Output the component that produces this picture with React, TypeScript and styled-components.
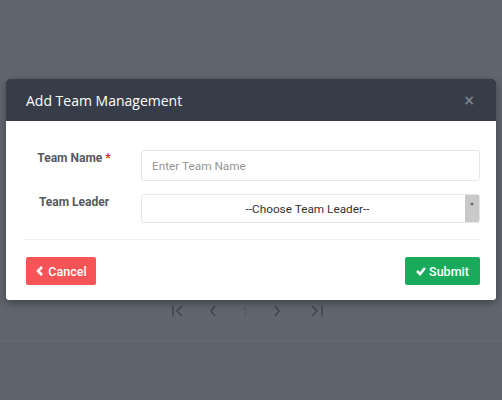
import React from "react";
import styled, { createGlobalStyle } from "styled-components";

const Global = createGlobalStyle`
  html, body { margin: 0; padding: 0; }
  body {
    background: #61656e;
    font-family: Roboto, "Liberation Sans", sans-serif;
    width: 502px;
    height: 400px;
    overflow: hidden;
  }
`;

const Page = styled.div`
  position: relative;
  width: 502px;
  height: 400px;
  display: flex;
  flex-direction: column;
`;

const Spacer = styled.div`
  height: 300px;
`;

const Pager = styled.div`
  height: 22px;
  margin-bottom: 19px;
  display: flex;
  align-items: center;
  justify-content: center;
  padding-right: 2px;
  color: #40454d;
  font-size: 14px;
`;

const PageItem = styled.span<{ $w: number }>`
  width: ${(p) => p.$w}px;
  display: flex;
  justify-content: center;
  align-items: center;
`;

const PageNum = styled.span`
  color: #555b63;
  font-size: 13px;
`;

const Footer = styled.div`
  flex: 1;
  background: #5d646c;
  border-top: 1px solid #646a73;
`;

const Modal = styled.div`
  position: absolute;
  left: 6px;
  top: 79px;
  width: 490px;
  background: #fff;
  border-radius: 3px;
  box-shadow: 0 3px 9px rgba(0, 0, 0, 0.35);
  overflow: hidden;
`;

const Header = styled.div`
  height: 42px;
  background: #363d48;
  display: flex;
  align-items: center;
  justify-content: space-between;
  padding: 0 20px 0 20px;
  box-sizing: border-box;
`;

const Title = styled.h4`
  margin: 0;
  color: #fff;
  font-family: "Open Sans", sans-serif;
  font-weight: 500;
  font-size: 14px;
`;

const Close = styled.span`
  color: #7b8189;
  font-family: "DejaVu Sans", sans-serif;
  font-weight: bold;
  font-size: 14px;
  line-height: 1;
  margin-right: 1px;
`;

const Body = styled.div`
  padding: 29px 16px 0 19px;
  display: flex;
  flex-direction: column;
  gap: 13px;
`;

const Row = styled.div`
  display: grid;
  grid-template-columns: 116px 1fr;
  align-items: start;
`;

const Label = styled.label`
  text-align: center;
  font-weight: bold;
  font-size: 12px;
  color: #555a60;
  padding-top: 1px;
  padding-right: 18px;
`;

const Star = styled.span`
  color: #e0262b;
`;

const Input = styled.input`
  height: 31px;
  box-sizing: border-box;
  border: 1px solid #e6e6e6;
  border-radius: 3px;
  padding: 0 10px;
  font-family: Roboto, sans-serif;
  font-size: 11.8px;
  color: #333;
  outline: none;
  &::placeholder {
    color: #959595;
  }
`;

const Select = styled.div`
  height: 29px;
  box-sizing: border-box;
  border: 1px solid #e6e6e6;
  border-radius: 3px;
  display: flex;
  align-items: stretch;
  font-size: 11.8px;
  color: #333;
`;

const SelectText = styled.div`
  flex: 1;
  display: flex;
  align-items: center;
  justify-content: center;
  padding-left: 8px;
`;

const Arrow = styled.div`
  width: 14px;
  background: #c9c9c9;
  display: flex;
  align-items: flex-start;
  justify-content: center;
  padding-top: 8px;
  box-sizing: border-box;
  &::after {
    content: "";
    border-left: 2.5px solid transparent;
    border-right: 2.5px solid transparent;
    border-top: 3px solid #666;
  }
`;

const Divider = styled.hr`
  border: 0;
  border-top: 1px solid #eeeeee;
  margin: 3px 0 0 0;
`;

const Actions = styled.div`
  display: flex;
  justify-content: space-between;
  padding: 17px 16px 15px 20px;
`;

const Button = styled.button<{ $variant: "danger" | "success" }>`
  height: 28px;
  border: 0;
  border-radius: 2px;
  color: #fff;
  font-family: Roboto, sans-serif;
  font-size: 12.5px;
  font-weight: 500;
  display: flex;
  align-items: center;
  gap: 3px;
  padding: 0;
  width: ${(p) => (p.$variant === "danger" ? "70px" : "75px")};
  justify-content: center;
  background: ${(p) => (p.$variant === "danger" ? "#f65456" : "#1aaa5c")};
`;

const Icon = styled.svg`
  width: 10px;
  height: 10px;
  flex: none;
`;

export default function App() {
  return (
    <>
      <Global />
      <Page>
        <Spacer />
        <Pager>
          <PageItem $w={36}>
            <svg width="14" height="12" viewBox="0 0 14 12" fill="none" stroke="#41464e" strokeWidth="1.6">
              <line x1="2" y1="0.5" x2="2" y2="11.5" />
              <polyline points="11,1 6,6 11,11" />
            </svg>
          </PageItem>
          <PageItem $w={34}>
            <svg width="8" height="12" viewBox="0 0 8 12" fill="none" stroke="#41464e" strokeWidth="1.6">
              <polyline points="6,1 2,6 6,11" />
            </svg>
          </PageItem>
          <PageItem $w={30}>
            <PageNum>1</PageNum>
          </PageItem>
          <PageItem $w={34}>
            <svg width="8" height="12" viewBox="0 0 8 12" fill="none" stroke="#41464e" strokeWidth="1.6">
              <polyline points="2,1 6,6 2,11" />
            </svg>
          </PageItem>
          <PageItem $w={46}>
            <svg width="14" height="12" viewBox="0 0 14 12" fill="none" stroke="#41464e" strokeWidth="1.6">
              <polyline points="2,1 7,6 2,11" />
              <line x1="12" y1="0.5" x2="12" y2="11.5" />
            </svg>
          </PageItem>
        </Pager>
        <Footer />
        <Modal>
          <Header>
            <Title>Add Team Management</Title>
            <Close>×</Close>
          </Header>
          <Body>
            <Row>
              <Label>
                Team Name <Star>*</Star>
              </Label>
              <Input placeholder="Enter Team Name" />
            </Row>
            <Row>
              <Label>Team Leader</Label>
              <Select>
                <SelectText>--Choose Team Leader--</SelectText>
                <Arrow />
              </Select>
            </Row>
            <Divider />
          </Body>
          <Actions>
            <Button $variant="danger">
              <Icon viewBox="0 0 10 10" fill="none" stroke="#fff" strokeWidth="2.6">
                <polyline points="7,1 3,5 7,9" />
              </Icon>
              Cancel
            </Button>
            <Button $variant="success">
              <Icon viewBox="0 0 10 10" fill="none" stroke="#fff" strokeWidth="2.6">
                <polyline points="1,5 4,8 9,2" />
              </Icon>
              Submit
            </Button>
          </Actions>
        </Modal>
      </Page>
    </>
  );
}
